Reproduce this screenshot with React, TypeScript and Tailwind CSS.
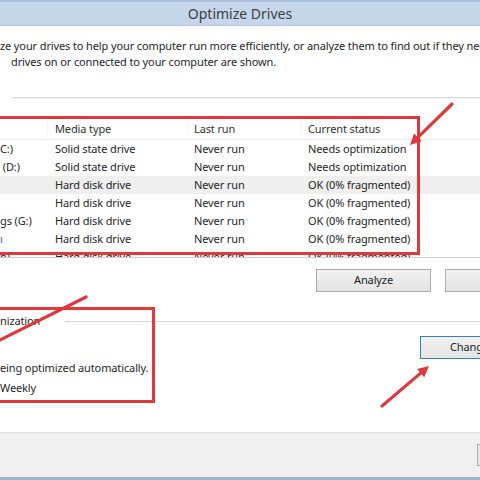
import React from 'react';

const rows = [
  { drive: 'C:)', media: 'Solid state drive', last: 'Never run', status: 'Needs optimization', highlight: false },
  { drive: ' (D:)', media: 'Solid state drive', last: 'Never run', status: 'Needs optimization', highlight: false },
  { drive: '', media: 'Hard disk drive', last: 'Never run', status: 'OK (0% fragmented)', highlight: true },
  { drive: '', media: 'Hard disk drive', last: 'Never run', status: 'OK (0% fragmented)', highlight: false },
  { drive: 'gs (G:)', media: 'Hard disk drive', last: 'Never run', status: 'OK (0% fragmented)', highlight: false },
  { drive: 'ı', media: 'Hard disk drive', last: 'Never run', status: 'OK (0% fragmented)', highlight: false },
  { drive: 'n)', media: 'Hard disk drive', last: 'Never run', status: 'OK (0% fragmented)', highlight: false },
];

function Arrow({ x1, y1, x2, y2 }: { x1: number; y1: number; x2: number; y2: number }) {
  const a = Math.atan2(y2 - y1, x2 - x1);
  const len = 11;
  const w = 5.5;
  const bx = x2 - Math.cos(a) * len;
  const by = y2 - Math.sin(a) * len;
  const px = -Math.sin(a) * w;
  const py = Math.cos(a) * w;
  return (
    <g>
      <line x1={x1} y1={y1} x2={bx} y2={by} stroke="#e0393b" strokeWidth="3.2" strokeLinecap="round" />
      <polygon points={`${x2},${y2} ${bx + px},${by + py} ${bx - px},${by - py}`} fill="#e0393b" />
    </g>
  );
}

export default function App() {
  return (
    <div
      className="relative flex flex-col w-[480px] h-[480px] overflow-hidden bg-white text-[11px] tracking-[-0.12px] text-[#262626]"
      style={{ fontFamily: '"Noto Sans", "Open Sans", sans-serif' }}
    >
      {/* Title bar */}
      <div className="h-[26px] flex items-center justify-center bg-[#c6d6ea] border-t-2 border-t-[#adc2dc] border-b border-b-[#b3c5dc] text-[14px] tracking-normal text-[#3d3d3d]">
        Optimize Drives
      </div>

      {/* Description */}
      <div className="pt-[12px] leading-[16px] whitespace-nowrap">
        <div>ze your drives to help your computer run more efficiently, or analyze them to find out if they need</div>
        <div className="pl-[11px]">drives on or connected to your computer are shown.</div>
      </div>

      {/* Status list */}
      <div className="mt-[27px] ml-[12px] h-px bg-[#dadada] shadow-[0_1px_1px_rgba(0,0,0,0.06)]" />
      <div className="mt-[21px] h-[139px] overflow-hidden border-b border-[#cfcfcf]">
        <div className="flex h-[21px] items-center border-b border-[#ececec] text-[#333]">
          <div className="w-[48px] h-full border-r border-[#f6f6f6]" />
          <div className="w-[140px] pl-[7px] h-full flex items-center border-r border-[#f6f6f6]">Media type</div>
          <div className="w-[114px] pl-[6px] h-full flex items-center border-r border-[#f6f6f6]">Last run</div>
          <div className="flex-1 pl-[6px] h-full flex items-center">Current status</div>
        </div>
        {rows.map((r, i) => (
          <div key={i} className={`flex h-[18px] items-center ${r.highlight ? 'bg-[#efefef]' : ''}`}>
            <div className={`w-[48px] whitespace-pre ${i === 5 ? 'text-[#2b5ea8]' : ''}`}>{r.drive}</div>
            <div className="w-[140px] pl-[7px]">{r.media}</div>
            <div className="w-[114px] pl-[6px]">{r.last}</div>
            <div className="flex-1 pl-[6px]">{r.status}</div>
          </div>
        ))}
      </div>

      {/* Analyze / Optimize buttons */}
      <div className="mt-[11px] flex gap-[14px] pl-[316px]">
        <button className="shrink-0 w-[115px] h-[23px] border border-[#acacac] bg-gradient-to-b from-[#f2f2f2] to-[#e3e3e3] text-[#222]">
          Analyze
        </button>
        <button className="shrink-0 w-[115px] h-[23px] border border-[#acacac] bg-gradient-to-b from-[#f2f2f2] to-[#e3e3e3] text-[#222]">
          Optimize
        </button>
      </div>

      {/* Scheduled optimization group */}
      <div className="mt-[21px] flex items-center h-[16px]">
        <span className="leading-[16px]">nization</span>
        <div className="ml-[25px] flex-1 h-px bg-[#d4d4d4]" />
      </div>

      <div className="mt-[7px] flex">
        <div className="flex-1 pt-[22px] leading-[20px] whitespace-nowrap">
          <div>eing optimized automatically.</div>
          <div>Weekly</div>
        </div>
        <button className="shrink-0 w-[115px] h-[23px] mr-[-55px] border border-[#3c7fb1] bg-gradient-to-b from-[#f1f1f1] to-[#e4e4e4] text-left pl-[29px] text-[#222] whitespace-nowrap">
          Change settings
        </button>
      </div>

      {/* Footer */}
      <div className="mt-auto h-[45px] bg-[#f0f0f0] border-t border-[#e2e2e2] flex items-center">
        <button className="ml-[477px] shrink-0 w-[80px] h-[22px] border border-[#acacac] bg-[#e8e8e8]" />
      </div>
      <div className="h-[3px] bg-[#9eb4ce]" />

      {/* Annotations */}
      <div className="absolute left-[-3px] top-[116px] w-[423px] h-[139px] border-[3px] border-[#e0393b]" />
      <div className="absolute left-[-3px] top-[307px] w-[158px] h-[96px] border-[3px] border-[#e0393b]" />
      <svg className="absolute inset-0 pointer-events-none" width="480" height="480" viewBox="0 0 480 480">
        <Arrow x1={452} y1={104} x2={410} y2={145} />
        <line x1={86} y1={297} x2={-6} y2={343} stroke="#e0393b" strokeWidth="3.2" strokeLinecap="round" />
        <Arrow x1={382} y1={406} x2={429} y2={366} />
      </svg>
    </div>
  );
}
